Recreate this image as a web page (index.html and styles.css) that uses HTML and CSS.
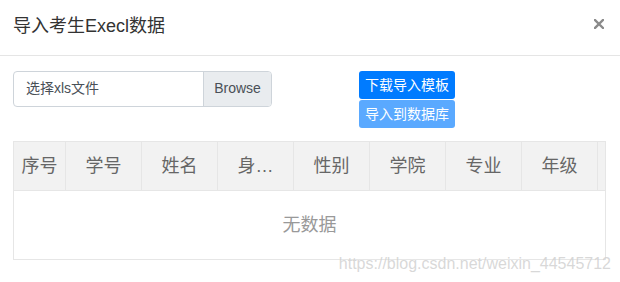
FILE: index.html
```html
<!DOCTYPE html>
<html lang="zh-CN">
<head>
<meta charset="utf-8">
<title>导入考生Execl数据</title>
<link rel="stylesheet" href="styles.css">
</head>
<body>
<div class="modal">
  <div class="modal-header">
    <h4 class="modal-title">导入考生Execl数据</h4>
    <button class="close" type="button" aria-label="Close">
      <svg width="10" height="10" viewBox="0 0 10 10"><path d="M1 1L9 9M9 1L1 9" stroke="#8a8a8a" stroke-width="2.4" stroke-linecap="square"/></svg>
    </button>
  </div>
  <div class="modal-body">
    <div class="toolbar">
      <div class="file-group">
        <span class="file-label">选择xls文件</span>
        <span class="file-browse">Browse</span>
      </div>
      <div class="btn-stack">
        <button class="btn btn-primary" type="button">下载导入模板</button>
        <button class="btn btn-primary btn-disabled" type="button">导入到数据库</button>
      </div>
    </div>
    <div class="table">
      <div class="thead">
        <div class="th th-first">序号</div>
        <div class="th">学号</div>
        <div class="th">姓名</div>
        <div class="th" title="身份证号">身…</div>
        <div class="th">性别</div>
        <div class="th">学院</div>
        <div class="th">专业</div>
        <div class="th">年级</div>
        <div class="th-gutter"></div>
      </div>
      <div class="tbody">无数据</div>
    </div>
  </div>
  <div class="watermark">https://blog.csdn.net/weixin_44545712</div>
</div>
</body>
</html>
```

FILE: styles.css
```css
* { box-sizing: border-box; }
html, body { margin: 0; padding: 0; background: #fff; }
body {
  font-family: "Liberation Sans", "Noto Sans CJK SC", sans-serif;
  color: #333;
  width: 620px;
  height: 282px;
  overflow: hidden;
}
.modal { position: relative; width: 620px; height: 282px; }
.modal-header {
  height: 56px;
  border-bottom: 1px solid #e5e5e5;
  display: flex;
  align-items: flex-start;
  justify-content: space-between;
  padding: 14px 16px 0 13px;
}
.modal-title {
  margin: 0;
  font-size: 18px;
  font-weight: normal;
  line-height: 24px;
  color: #333;
}
.close {
  border: 0;
  background: transparent;
  padding: 0;
  margin-top: 5px;
  width: 10px;
  height: 10px;
  display: block;
  cursor: pointer;
}
.close svg { display: block; }
.modal-body { padding: 15px 14px 0 13px; }
.toolbar { display: flex; align-items: flex-start; height: 57px; }
.file-group {
  width: 259px;
  height: 36px;
  display: flex;
  border: 1px solid #ced4da;
  border-radius: 4px;
  overflow: hidden;
  font-size: 14px;
  color: #495057;
}
.file-label { flex: 1; padding-left: 12px; line-height: 33px; }
.file-browse {
  width: 68px;
  background: #e9ecef;
  border-left: 1px solid #ced4da;
  text-align: center;
  line-height: 33px;
}
.btn-stack {
  margin-left: 87px;
  display: flex;
  flex-direction: column;
  gap: 1px;
  width: 96px;
}
.btn {
  height: 28px;
  border: 0;
  border-radius: 3px;
  padding: 0;
  font-family: "Liberation Sans", "Noto Sans CJK SC", sans-serif;
  font-size: 14px;
  line-height: 28px;
  color: #fff;
  text-align: center;
}
.btn-primary { background: #007bff; }
.btn-disabled { background: #5aa9ff; }
.table {
  margin-top: 13px;
  width: 593px;
  border: 1px solid #e6e6e6;
}
.thead {
  display: flex;
  height: 49px;
  background: #f2f2f2;
  border-bottom: 1px solid #e6e6e6;
}
.th {
  width: 76px;
  border-right: 1px solid #e6e6e6;
  font-size: 18px;
  line-height: 48px;
  color: #666;
  text-align: center;
  white-space: nowrap;
}
.th-first { width: 52px; }
.th-gutter { flex: 1; }
.tbody {
  height: 68px;
  font-size: 18px;
  line-height: 68px;
  color: #999;
  text-align: center;
}
.watermark {
  position: absolute;
  right: 9px;
  bottom: 9px;
  font-family: "Liberation Sans", sans-serif;
  font-size: 16px;
  line-height: 18px;
  color: rgba(190, 190, 190, 0.6);
  text-shadow: 0 0 1px rgba(255,255,255,0.6);
}
```
